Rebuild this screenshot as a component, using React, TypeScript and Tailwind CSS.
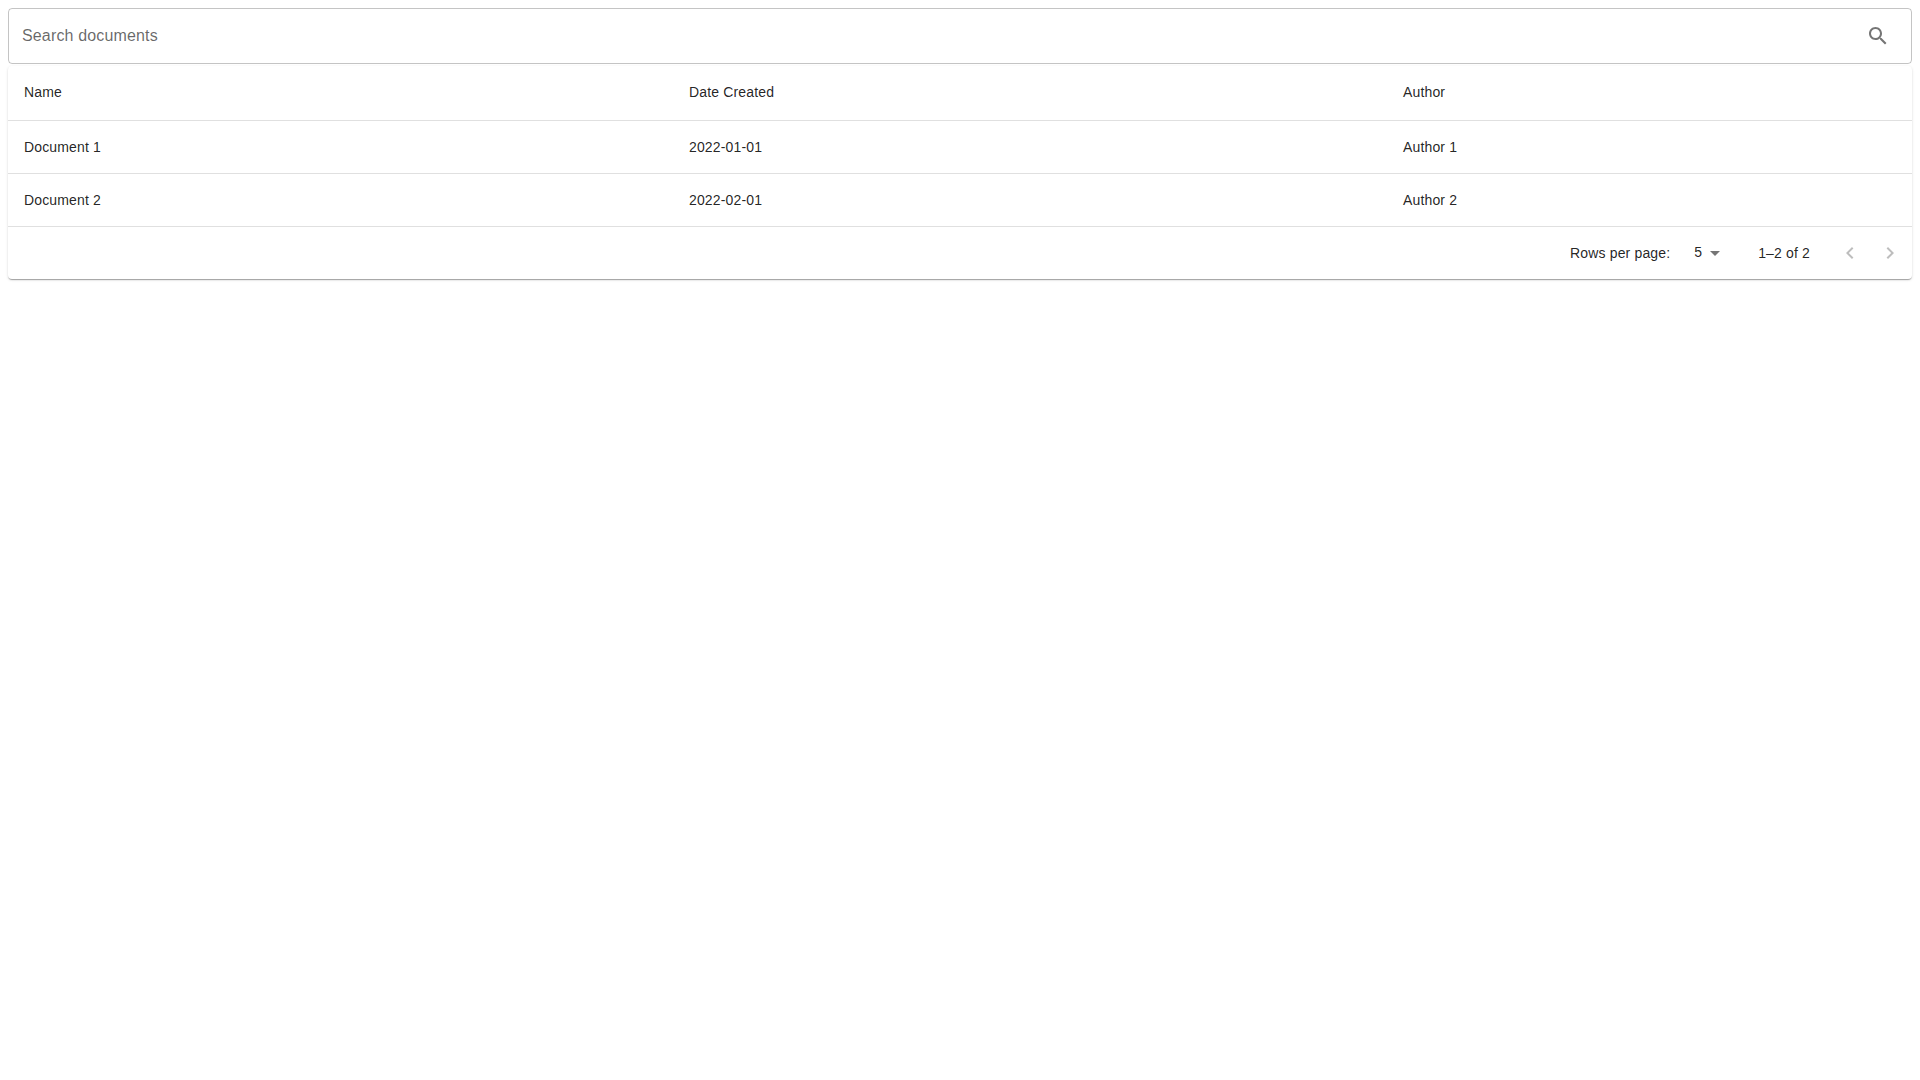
const rows = [
  { name: "Document 1", created: "2022-01-01", author: "Author 1" },
  { name: "Document 2", created: "2022-02-01", author: "Author 2" },
];

const cell = "h-[53px] px-4 text-left text-sm tracking-[0.01071em] font-normal text-[rgba(0,0,0,0.87)] border-b border-[#e0e0e0]";

function SearchIcon() {
  return (
    <svg width="24" height="24" viewBox="0 0 24 24" fill="#757575">
      <path d="M15.5 14h-.79l-.28-.27C15.41 12.59 16 11.11 16 9.5 16 5.91 13.09 3 9.5 3S3 5.91 3 9.5 5.91 16 9.5 16c1.61 0 3.09-.59 4.23-1.57l.27.28v.79l5 4.99L20.49 19l-4.99-5zm-6 0C7.01 14 5 11.99 5 9.5S7.01 5 9.5 5 14 7.01 14 9.5 11.99 14 9.5 14z" />
    </svg>
  );
}

function PageArrow({ d }: { d: string }) {
  return (
    <button className="w-10 h-10 flex items-center justify-center">
      <svg width="24" height="24" viewBox="0 0 24 24" fill="rgba(0,0,0,0.26)">
        <path d={d} />
      </svg>
    </button>
  );
}

export default function App() {
  return (
    <div className="min-h-screen bg-white p-2 font-['Liberation_Sans',Arial,sans-serif]">
      <div className="h-14 flex items-center justify-between pl-[13px] pr-[9px] border border-[rgba(0,0,0,0.23)] rounded">
        <span className="text-base tracking-[0.00938em] text-[rgba(0,0,0,0.6)]">Search documents</span>
        <div className="w-12 h-12 flex items-center justify-center">
          <SearchIcon />
        </div>
      </div>
      <div className="mt-[2px] rounded bg-white shadow-[0px_2px_1px_-1px_rgba(0,0,0,0.2),0px_1px_1px_0px_rgba(0,0,0,0.14),0px_1px_3px_0px_rgba(0,0,0,0.12)]">
        <table className="w-full table-fixed border-collapse">
          <colgroup>
            <col className="w-[665px]" />
            <col className="w-[714px]" />
            <col />
          </colgroup>
          <thead>
            <tr>
              <th className={`${cell} !h-[54px] pb-[2px]`}>Name</th>
              <th className={`${cell} pb-[2px]`}>Date Created</th>
              <th className={`${cell} pb-[2px]`}>Author</th>
            </tr>
          </thead>
          <tbody>
            {rows.map((r) => (
              <tr key={r.name}>
                <td className={cell}>{r.name}</td>
                <td className={cell}>{r.created}</td>
                <td className={cell}>{r.author}</td>
              </tr>
            ))}
          </tbody>
        </table>
        <div className="h-[52px] flex items-center justify-end pr-[2px] text-sm tracking-[0.01071em] text-[rgba(0,0,0,0.87)]">
          <span>Rows per page:</span>
          <div className="ml-6 mr-[31px] flex items-center">
            <span className="-mt-[2px]">5</span>
            <svg className="ml-[1px]" width="24" height="24" viewBox="0 0 24 24" fill="rgba(0,0,0,0.54)">
              <path d="M7 10l5 5 5-5z" />
            </svg>
          </div>
          <span>1–2 of 2</span>
          <div className="ml-5 flex items-center">
            <PageArrow d="M15.41 7.41 14 6l-6 6 6 6 1.41-1.41L10.83 12z" />
            <PageArrow d="M10 6 8.59 7.41 13.17 12l-4.58 4.59L10 18l6-6z" />
          </div>
        </div>
      </div>
    </div>
  );
}
